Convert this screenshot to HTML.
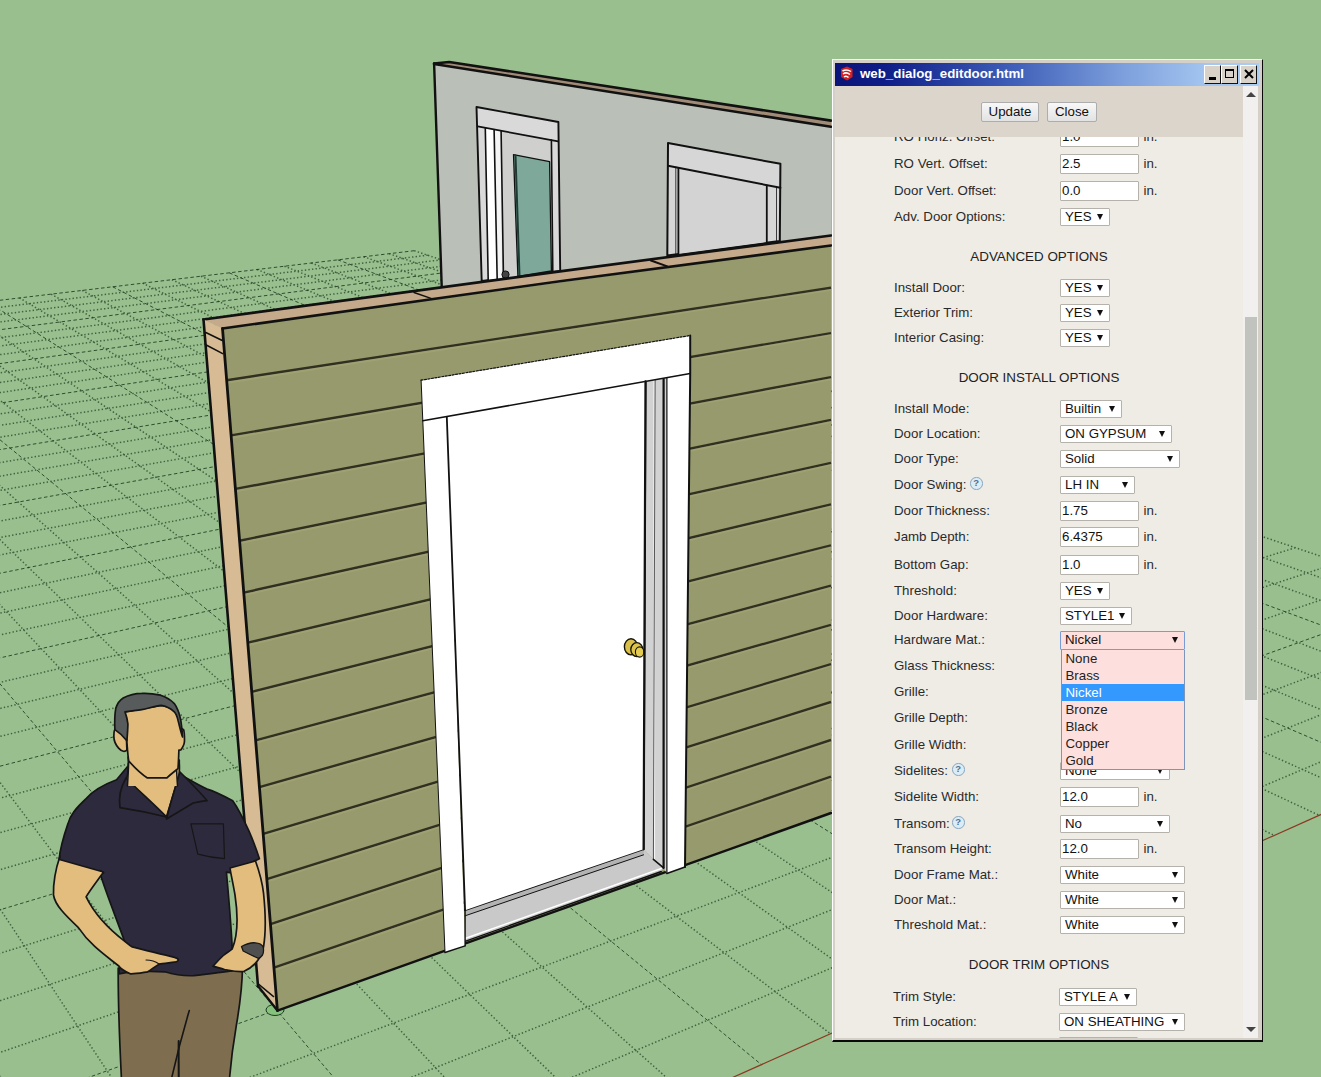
<!DOCTYPE html>
<html><head><meta charset="utf-8">
<style>
html,body{margin:0;padding:0;width:1321px;height:1077px;overflow:hidden;background:#99bf8f;font-family:"Liberation Sans",sans-serif}
#dlg{position:absolute;left:832px;top:59px;width:431px;height:983px;background:#d4d0c8;border-top:1px solid #f4f4f0;border-left:1px solid #ffffff;border-right:1.5px solid #0a0a0a;border-bottom:2px solid #0a0a0a;box-sizing:border-box}
#title{position:absolute;left:835px;top:63px;width:424px;height:23px;background:linear-gradient(90deg,#0a1478 0%,#0f1e88 12%,#3f5fb8 42%,#7d9fdc 68%,#a4c6f0 88%,#aacdf4 100%)}
#ttext{position:absolute;left:860px;top:66px;color:#fff;font-weight:bold;font-size:13.3px;line-height:16px;white-space:nowrap}
.tb{position:absolute;top:65px;height:19px;background:#d8d2c8;box-sizing:border-box;border-top:1px solid #fff;border-left:1px solid #fff;border-right:1.5px solid #111;border-bottom:1.5px solid #111}
#content{position:absolute;left:835px;top:86px;width:422px;height:952px;background:#efece6;overflow:hidden}
#bar{position:absolute;left:835px;top:86px;width:408px;height:51px;background:#dcd5cb}
#sb{position:absolute;left:1243px;top:86px;width:15px;height:952px;background:#f2f0ef}
#thumb{position:absolute;left:1245px;top:317px;width:12px;height:383px;background:#c1c3bf}
.btn{position:absolute;top:102px;height:20px;box-sizing:border-box;border:1px solid #adadad;border-radius:2px;background:linear-gradient(#f8f8f8,#e2e2e2);font-size:13.3px;color:#111;text-align:center;line-height:18px}
.lb{position:absolute;font-size:13.3px;line-height:16px;color:#2a2a2a;white-space:nowrap}
.hd{position:absolute;left:835px;width:408px;text-align:center;font-size:13.4px;line-height:16px;color:#222;letter-spacing:0px}
.in,.sel{position:absolute;height:20px;box-sizing:border-box;background:#fff;border:1px solid #b5b2ac;border-radius:1px}
.in span,.sel span{position:absolute;left:1px;font-size:13.3px;line-height:16px;color:#111;white-space:nowrap}
.sel i{position:absolute;right:6px;top:5px;width:0;height:0;border-left:3px solid transparent;border-right:3px solid transparent;border-top:6px solid #111}
.sel span{left:4px}
.foc{background:#fde0de;border:1px solid #7a9cd4}
.q{position:absolute;width:10.5px;height:10.5px;border:1px solid #8aa6bc;border-radius:50%;color:#4d6f8f;font-size:9.5px;line-height:10.5px;text-align:center;font-weight:bold;background:#dcecf6}
.dd{position:absolute;left:1060.5px;top:649.8px;width:124.2px;height:120.4px;box-sizing:border-box;background:#fde0de;border:1px solid #7e94b8;border-top:none}
.dd div{position:absolute;left:0;right:0;height:17px;font-size:13.3px;line-height:17px;padding-left:4px;color:#222}
.dd .hi{background:#3399ff;color:#fff}
</style></head><body>
<svg width="1321" height="1077" viewBox="0 0 1321 1077" style="position:absolute;left:0;top:0">
<rect width="1321" height="1077" fill="#99bf8f"/>
<g stroke="#1d3a1d" stroke-width="1" fill="none">
<path stroke-opacity="0.7" stroke-width="1.5" stroke-dasharray="1.4 2.2" d="M414.3 250.7L1650.2 667.3 M389.2 253.7L1618.8 681.3 M363.7 256.7L1586.2 695.9 M311.3 263.0L1517.2 726.7 M284.4 266.2L1480.7 743.1 M257.1 269.5L1442.7 760.0 M200.9 276.2L1362.0 796.1 M172.0 279.7L1319.1 815.3 M142.6 283.2L1274.2 835.4 M82.2 290.4L1178.5 878.2 M51.1 294.1L1127.2 901.1 M19.4 297.9L1073.6 925.1 M-45.8 305.7L958.1 976.7 M-79.3 309.7L895.9 1004.5 M-113.5 313.8L830.5 1033.8 M-184.0 322.3L688.6 1097.2 M-220.3 326.6L611.5 1131.6 M-257.4 331.1L529.9 1168.1 M-333.9 340.2L351.4 1247.9 M-373.4 344.9L253.4 1291.7 M-413.7 349.8L148.9 1338.4 M-497.0 359.7L-82.6 1441.9 M-540.0 364.9L-211.3 1499.5 M-584.1 370.2L-350.0 1561.4 M-675.1 381.0L-662.2 1701.0 M-722.2 386.7L-838.7 1779.9 M-770.4 392.5L-1031.4 1866.1 M-870.4 404.4L-1475.1 2064.4 M-922.2 410.6L-1732.2 2179.3 M-975.3 417.0L-2018.1 2307.1 M-1085.4 430.1L-2698.0 2611.0 M-1142.6 437.0L-3106.5 2793.7 M-1201.3 444.0L-3574.0 3002.7 M427.7 255.2L-1272.8 462.2 M441.3 259.8L-1284.4 473.6 M455.4 264.5L-1296.5 485.4 M484.5 274.3L-1322.2 510.6 M499.6 279.4L-1335.9 524.0 M515.2 284.7L-1350.2 537.9 M547.5 295.6L-1380.6 567.8 M564.3 301.2L-1396.9 583.7 M581.6 307.1L-1414.0 600.5 M617.7 319.2L-1450.7 636.4 M636.5 325.6L-1470.5 655.8 M655.8 332.1L-1491.3 676.2 M696.4 345.8L-1536.5 720.3 M717.5 352.9L-1560.9 744.3 M739.4 360.3L-1586.9 769.7 M785.2 375.7L-1643.6 825.3 M809.2 383.8L-1674.7 855.7 M834.1 392.2L-1707.9 888.2 M886.3 409.8L-1781.4 960.2 M913.8 419.1L-1822.3 1000.2 M942.3 428.7L-1866.2 1043.2 M1002.4 448.9L-1965.2 1140.1 M1034.2 459.6L-2021.2 1194.9 M1067.2 470.8L-2082.2 1254.7 M1137.2 494.3L-2222.6 1392.1 M1174.3 506.9L-2303.9 1471.8 M1212.9 519.9L-2394.3 1560.2 M1295.3 547.7L-2609.0 1770.4 M1339.2 562.5L-2737.8 1896.6 M1385.2 577.9L-2885.1 2040.8 M1483.6 611.1L-3253.6 2401.5 M1536.4 628.9L-3488.1 2631.2 M1591.9 647.6L-3769.8 2906.9"/>
<path stroke-opacity="0.85" stroke-dasharray="3.5 2.5" d="M337.7 259.8L1552.4 711.0 M229.2 272.8L1403.2 777.7 M112.7 286.8L1227.4 856.3 M-12.8 301.8L1017.2 950.3 M-148.4 318.0L761.4 1064.6 M-295.3 335.6L443.4 1206.8 M-454.9 354.7L37.1 1388.4 M-629.1 375.5L-499.8 1628.4 M-819.8 398.4L-1242.6 1960.5 M-1029.7 423.5L-2337.9 2450.1 M-1261.6 451.2L-4114.2 3244.1 M414.3 250.7L-1261.6 451.2 M469.7 269.4L-1309.1 497.7 M531.1 290.1L-1365.1 552.5 M599.4 313.1L-1431.9 618.0 M675.8 338.8L-1513.3 697.7 M761.9 367.9L-1614.4 796.6 M859.8 400.8L-1743.4 922.9 M971.8 438.6L-1913.7 1089.7 M1101.5 482.3L-2149.1 1320.1 M1253.2 533.5L-2495.3 1659.1 M1433.3 594.2L-3055.1 2207.2"/>
</g>
<line x1="1791.9" y1="604.0" x2="-499.8" y2="1628.4" stroke="#8a3a20" stroke-width="1.2"/><ellipse cx="275" cy="1010" rx="9" ry="5.5" fill="#85c27c" stroke="#1d3a20" stroke-width="1"/>
<polygon points="434.1,63.5 831.0,126.4 831.0,300.0 442.0,300.0" fill="#babfb8" stroke="none" stroke-width="0" stroke-linejoin="round" />
<polygon points="434.1,63.5 449.2,62.5 831.0,121.2 831.0,126.4" fill="#a08c76" stroke="none" stroke-width="0" stroke-linejoin="round" />
<polyline points="434.1,64.0 831.0,126.8" fill="none" stroke="#111" stroke-width="2.6" stroke-linejoin="round" stroke-linecap="round" />
<polyline points="434.1,63.5 449.2,62.0 831.0,120.6" fill="none" stroke="#111" stroke-width="2.6" stroke-linejoin="round" stroke-linecap="round" />
<polyline points="434.1,63.5 442.0,295.0" fill="none" stroke="#111" stroke-width="2.4" stroke-linejoin="round" stroke-linecap="round" />
<polygon points="476.5,107.0 558.4,122.0 560.2,271.0 481.7,281.0" fill="#d9d9d9" stroke="#111" stroke-width="1.9" stroke-linejoin="round" />
<polygon points="501.1,130.7 551.4,139.8 551.4,275.0 501.1,278.0" fill="#cfd0ce" stroke="none" stroke-width="0" stroke-linejoin="round" />
<polygon points="485.3,128.2 494.1,129.8 497.0,279.0 488.0,280.0" fill="#ffffff" stroke="none" stroke-width="0" stroke-linejoin="round" />
<polygon points="494.1,129.8 501.1,131.0 502.0,279.0 497.0,279.0" fill="#f4f4f4" stroke="none" stroke-width="0" stroke-linejoin="round" />
<polyline points="477.7,126.4 558.1,141.4" fill="none" stroke="#111" stroke-width="1.8" stroke-linejoin="round" stroke-linecap="round" />
<polyline points="485.3,128.3 488.2,280.0" fill="none" stroke="#111" stroke-width="1.6" stroke-linejoin="round" stroke-linecap="round" />
<polyline points="494.1,129.8 497.2,280.0" fill="none" stroke="#111" stroke-width="1.6" stroke-linejoin="round" stroke-linecap="round" />
<polyline points="501.1,131.0 503.5,280.0" fill="none" stroke="#111" stroke-width="1.6" stroke-linejoin="round" stroke-linecap="round" />
<polyline points="551.4,140.0 552.8,272.0" fill="none" stroke="#111" stroke-width="1.6" stroke-linejoin="round" stroke-linecap="round" />
<polygon points="513.5,154.6 549.6,161.7 551.4,271.0 517.9,276.3" fill="#7ea99a" stroke="#111" stroke-width="1.3" stroke-linejoin="round" />
<polyline points="515.5,155.5 519.5,276.0" fill="none" stroke="#1d3b35" stroke-width="2" stroke-linejoin="round" stroke-linecap="round" />
<circle cx="505.5" cy="274.5" r="3.6" fill="#444" stroke="#111" stroke-width="1"/>
<polygon points="668.0,143.0 780.4,163.8 779.8,241.1 667.3,255.4" fill="#d6d6d6" stroke="#111" stroke-width="2" stroke-linejoin="round" />
<polygon points="678.4,167.5 766.8,185.5 766.8,242.0 678.4,254.0" fill="#d3d3d3" stroke="none" stroke-width="0" stroke-linejoin="round" />
<polyline points="668.0,165.7 780.4,187.8" fill="none" stroke="#111" stroke-width="2" stroke-linejoin="round" stroke-linecap="round" />
<polyline points="678.4,168.0 678.4,254.0" fill="none" stroke="#111" stroke-width="1.8" stroke-linejoin="round" stroke-linecap="round" />
<polyline points="675.8,167.0 675.8,254.0" fill="none" stroke="#111" stroke-width="0.8" stroke-linejoin="round" stroke-linecap="round" />
<polyline points="766.8,185.5 766.8,242.0" fill="none" stroke="#111" stroke-width="1.8" stroke-linejoin="round" stroke-linecap="round" />
<polyline points="776.5,187.5 776.5,241.0" fill="none" stroke="#111" stroke-width="0.8" stroke-linejoin="round" stroke-linecap="round" />
<polygon points="203.5,319.5 560.0,271.4 831.0,235.5 831.0,245.5 560.0,281.2 222.5,328.5" fill="#c4a98a" stroke="none" stroke-width="0" stroke-linejoin="round" />
<polyline points="414.0,292.5 431.0,298.4" fill="none" stroke="#111" stroke-width="1.4" stroke-linejoin="round" stroke-linecap="round" />
<polyline points="650.9,260.5 667.3,266.4" fill="none" stroke="#111" stroke-width="2" stroke-linejoin="round" stroke-linecap="round" />
<polyline points="203.5,319.5 560.0,271.4 831.0,235.5" fill="none" stroke="#111" stroke-width="2.6" stroke-linejoin="round" stroke-linecap="round" />
<polygon points="203.5,319.5 222.5,328.5 277.4,1010.6 258.0,986.0" fill="#d6bb95" stroke="none" stroke-width="0" stroke-linejoin="round" />
<polyline points="205.8,332.5 222.3,340.5" fill="none" stroke="#111" stroke-width="1.6" stroke-linejoin="round" stroke-linecap="round" />
<polyline points="206.2,345.0 222.7,353.6" fill="none" stroke="#111" stroke-width="1.6" stroke-linejoin="round" stroke-linecap="round" />
<polyline points="257.9,983.6 273.6,996.6" fill="none" stroke="#111" stroke-width="1.4" stroke-linejoin="round" stroke-linecap="round" />
<polygon points="222.5,328.5 831.0,245.5 831.0,813.0 277.4,1010.6" fill="#979a6c" stroke="none" stroke-width="0" stroke-linejoin="round" />
<line x1="226.7" y1="380.2" x2="831.0" y2="287.8" stroke="#25251a" stroke-width="2.4" stroke-opacity="0.9"/>
<line x1="226.7" y1="382.7" x2="831.0" y2="289.8" stroke="#b0ae80" stroke-width="2" stroke-opacity="0.35"/>
<line x1="231.1" y1="435.4" x2="831.0" y2="333.1" stroke="#25251a" stroke-width="2.4" stroke-opacity="0.9"/>
<line x1="231.1" y1="437.9" x2="831.0" y2="335.1" stroke="#b0ae80" stroke-width="2" stroke-opacity="0.35"/>
<line x1="235.4" y1="488.9" x2="831.0" y2="377.1" stroke="#25251a" stroke-width="2.4" stroke-opacity="0.9"/>
<line x1="235.4" y1="491.4" x2="831.0" y2="379.2" stroke="#b0ae80" stroke-width="2" stroke-opacity="0.35"/>
<line x1="239.6" y1="540.7" x2="831.0" y2="419.9" stroke="#25251a" stroke-width="2.4" stroke-opacity="0.9"/>
<line x1="239.6" y1="543.2" x2="831.0" y2="421.9" stroke="#b0ae80" stroke-width="2" stroke-opacity="0.35"/>
<line x1="243.8" y1="592.6" x2="831.0" y2="462.9" stroke="#25251a" stroke-width="2.4" stroke-opacity="0.9"/>
<line x1="243.8" y1="595.1" x2="831.0" y2="464.9" stroke="#b0ae80" stroke-width="2" stroke-opacity="0.35"/>
<line x1="247.8" y1="642.7" x2="831.0" y2="504.4" stroke="#25251a" stroke-width="2.4" stroke-opacity="0.9"/>
<line x1="247.8" y1="645.2" x2="831.0" y2="506.5" stroke="#b0ae80" stroke-width="2" stroke-opacity="0.35"/>
<line x1="251.7" y1="691.8" x2="831.0" y2="545.3" stroke="#25251a" stroke-width="2.4" stroke-opacity="0.9"/>
<line x1="251.7" y1="694.3" x2="831.0" y2="547.3" stroke="#b0ae80" stroke-width="2" stroke-opacity="0.35"/>
<line x1="255.6" y1="740.3" x2="831.0" y2="585.7" stroke="#25251a" stroke-width="2.4" stroke-opacity="0.9"/>
<line x1="255.6" y1="742.8" x2="831.0" y2="587.8" stroke="#b0ae80" stroke-width="2" stroke-opacity="0.35"/>
<line x1="259.4" y1="787.1" x2="831.0" y2="624.8" stroke="#25251a" stroke-width="2.4" stroke-opacity="0.9"/>
<line x1="259.4" y1="789.6" x2="831.0" y2="626.9" stroke="#b0ae80" stroke-width="2" stroke-opacity="0.35"/>
<line x1="263.2" y1="833.9" x2="831.0" y2="664.1" stroke="#25251a" stroke-width="2.4" stroke-opacity="0.9"/>
<line x1="263.2" y1="836.4" x2="831.0" y2="666.1" stroke="#b0ae80" stroke-width="2" stroke-opacity="0.35"/>
<line x1="266.8" y1="879.1" x2="831.0" y2="702.0" stroke="#25251a" stroke-width="2.4" stroke-opacity="0.9"/>
<line x1="266.8" y1="881.6" x2="831.0" y2="704.1" stroke="#b0ae80" stroke-width="2" stroke-opacity="0.35"/>
<line x1="270.5" y1="924.2" x2="831.0" y2="740.0" stroke="#25251a" stroke-width="2.4" stroke-opacity="0.9"/>
<line x1="270.5" y1="926.7" x2="831.0" y2="742.1" stroke="#b0ae80" stroke-width="2" stroke-opacity="0.35"/>
<line x1="274.0" y1="967.7" x2="831.0" y2="776.7" stroke="#25251a" stroke-width="2.4" stroke-opacity="0.9"/>
<line x1="274.0" y1="970.2" x2="831.0" y2="778.8" stroke="#b0ae80" stroke-width="2" stroke-opacity="0.35"/>
<polyline points="222.5,328.5 560.0,281.2 831.0,245.5" fill="none" stroke="#111" stroke-width="2.6" stroke-linejoin="round" stroke-linecap="round" />
<polyline points="203.5,319.5 258.0,986.0" fill="none" stroke="#111" stroke-width="2.6" stroke-linejoin="round" stroke-linecap="round" />
<polyline points="222.5,328.5 277.4,1010.6" fill="none" stroke="#111" stroke-width="2.8" stroke-linejoin="round" stroke-linecap="round" />
<polyline points="258.0,986.0 277.4,1010.6 831.0,813.0" fill="none" stroke="#111" stroke-width="2.4" stroke-linejoin="round" stroke-linecap="round" />
<polygon points="465.1,910.2 643.6,849.2 653.4,859.4 663.6,867.8 661.3,871.5 465.0,941.4" fill="#c9c9c9" stroke="none" stroke-width="0" stroke-linejoin="round" />
<polygon points="465.1,910.2 643.6,849.2 643.6,854.8 465.1,915.8" fill="#b3b3b3" stroke="none" stroke-width="0" stroke-linejoin="round" />
<polyline points="465.1,910.2 643.6,849.2" fill="none" stroke="#111" stroke-width="1.8" stroke-linejoin="round" stroke-linecap="round" />
<polyline points="465.1,915.8 643.6,854.8" fill="none" stroke="#111" stroke-width="1" stroke-linejoin="round" stroke-linecap="round" />
<polyline points="465.0,938.5 661.3,868.5" fill="none" stroke="#fff" stroke-width="1.4" stroke-linejoin="round" stroke-linecap="round" />
<polyline points="465.0,941.4 661.3,871.5" fill="none" stroke="#111" stroke-width="1.4" stroke-linejoin="round" stroke-linecap="round" />
<polygon points="645.5,381.4 666.9,377.6 666.9,873.4 663.6,867.8 653.4,859.4 643.6,849.2" fill="#d2d2d2" stroke="none" stroke-width="0" stroke-linejoin="round" />
<polygon points="653.4,380.0 655.1,379.7 655.1,860.0 653.4,859.0" fill="#f4f4f4" stroke="none" stroke-width="0" stroke-linejoin="round" />
<polyline points="653.4,859.4 663.6,867.8" fill="none" stroke="#111" stroke-width="1.6" stroke-linejoin="round" stroke-linecap="round" />
<polyline points="645.5,381.4 643.6,849.2" fill="none" stroke="#111" stroke-width="2" stroke-linejoin="round" stroke-linecap="round" />
<polyline points="663.6,379.0 663.6,868.0" fill="none" stroke="#111" stroke-width="2.2" stroke-linejoin="round" stroke-linecap="round" />
<polyline points="655.1,380.0 653.4,859.0" fill="none" stroke="#111" stroke-width="0.7" stroke-linejoin="round" stroke-linecap="round" />
<polygon points="446.8,416.6 645.5,381.4 643.6,849.2 465.1,910.2" fill="#ffffff" stroke="none" stroke-width="0" stroke-linejoin="round" />
<polygon points="421.1,380.2 690.2,335.5 690.2,373.5 422.8,420.8" fill="#ffffff" stroke="none" stroke-width="0" stroke-linejoin="round" />
<polygon points="422.8,420.8 446.8,416.6 465.1,945.8 445.0,952.5" fill="#ffffff" stroke="none" stroke-width="0" stroke-linejoin="round" />
<polygon points="666.9,377.6 690.2,373.5 685.0,866.9 666.9,873.4" fill="#ffffff" stroke="none" stroke-width="0" stroke-linejoin="round" />
<polyline points="421.1,380.2 690.2,335.5" fill="none" stroke="#111" stroke-width="1.2" stroke-linejoin="round" stroke-linecap="round" stroke-dasharray="2 1.5"/>
<polyline points="422.8,420.8 690.2,373.5" fill="none" stroke="#111" stroke-width="1.6" stroke-linejoin="round" stroke-linecap="round" />
<polyline points="446.8,417.0 465.1,910.2" fill="none" stroke="#111" stroke-width="1.8" stroke-linejoin="round" stroke-linecap="round" />
<polyline points="465.1,910.0 465.1,945.8" fill="none" stroke="#111" stroke-width="1.4" stroke-linejoin="round" stroke-linecap="round" />
<polyline points="690.2,335.5 690.2,373.5 685.0,866.9" fill="none" stroke="#111" stroke-width="2" stroke-linejoin="round" stroke-linecap="round" />
<polyline points="666.9,377.6 666.9,873.4" fill="none" stroke="#111" stroke-width="1.2" stroke-linejoin="round" stroke-linecap="round" />
<polyline points="421.1,380.2 422.8,420.8 445.0,952.5" fill="none" stroke="#111" stroke-width="1" stroke-linejoin="round" stroke-linecap="round" />
<polyline points="445.0,952.5 465.1,945.8" fill="none" stroke="#111" stroke-width="1.4" stroke-linejoin="round" stroke-linecap="round" />
<polyline points="666.9,873.4 685.0,866.9" fill="none" stroke="#111" stroke-width="1.6" stroke-linejoin="round" stroke-linecap="round" />
<ellipse cx="631" cy="646.8" rx="6.6" ry="8.1" fill="#d8c04a" stroke="#151208" stroke-width="1.4"/>
<ellipse cx="636.8" cy="649.6" rx="6" ry="6.9" fill="#dcc44c" stroke="#151208" stroke-width="1.3"/>
<ellipse cx="639.6" cy="652" rx="4.2" ry="5.1" fill="#e4cc52" stroke="#151208" stroke-width="1.1"/>
<polyline points="645.5,381.4 643.6,849.2" fill="none" stroke="#111" stroke-width="2.2" stroke-linejoin="round" stroke-linecap="round" /><g stroke="#161616" stroke-width="1.7" stroke-linejoin="round" stroke-linecap="round">
<!-- pants -->
<path d="M118.2,968 L242.5,966 C242.3,990 239,1010 236.3,1025.7 C233,1045 231,1060 229.4,1080 L121.5,1080 C119.5,1040 118,1000 118.2,968 Z" fill="#7e6d4f"/>
<path d="M189.3,1010.6 C185,1025 178,1050 171.2,1080" fill="none" stroke-width="1.6"/>
<path d="M178.7,1041 C178.5,1055 178.8,1068 178.7,1080" fill="none" stroke-width="2"/>
<!-- shirt -->
<path d="M116.6,779.8 C100,786 92,792 86.4,798.4 C76,808 70,815 67.9,823.9 C63,838 60,850 59,860 C72,866 88,871 103.5,873 C100,870 99,870 99.6,872 C105,890 115,915 124.5,941.1 C122,952 120,962 118.8,973.8 C135,971 150,971 164.9,971.8 C175,975 185,976 193.7,975.7 C210,974 222,972 232.2,970.9 C233,960 233,955 232.2,946.9 C231,925 229,900 226.4,872 C228,872 229,873 230.3,872.7 C240,868 250,863 259.4,858.7 C256,848 252,838 248.9,830.9 C243,818 238,808 232.7,800.7 C222,795 214,791 207.1,789.1 C198,785 190,780 181,775 L128,766 Z" fill="#2e2a3d"/>
<!-- right arm + hand -->
<path d="M230,868 L255.5,861 C258,868 262,880 263.5,893 C265.5,912 265.5,935 263.5,947 C263,949 262.8,950 262.5,951 C260,960 252,968 243.7,971.5 C235,972 228,970 224.5,969.5 C220,968 215,967 213,966.1 C217,962 221,957 224.5,954.6 C228,952 231,950 232.2,948.8 C238,935 238,915 235,895 C233,883 231,875 230,868 Z" fill="#e3bd7e"/>
<!-- left arm + hand -->
<path d="M59.5,859.5 L103.5,872 C98,880 90,890 86.1,896.9 C95,915 110,930 124.5,941.1 C128,944 130,946 132.2,946.9 C148,951 162,954 174.5,957.4 C177,958 178.5,959 178.4,960.3 C177,962 176,962.2 174.5,962.2 C168,963 162,963.5 159.1,964.2 C154,967 151,970 147.6,971.8 C140,973 135,974 130.3,973.8 C124,971 120,968 118.8,966 C105,955 90,945 78.4,927.6 C65,915 55,905 53.5,895 C53,880 56,868 60,856 Z" fill="#e3bd7e"/>
<path d="M159,964 C155,961 150,960 146,960" fill="none" stroke-width="1.1"/>
<!-- neck / v skin -->
<path d="M128.2,757 C129,770 128,775 126,782 C140,795 155,808 166.5,817 C170,805 175,790 179,775 C180,768 179,763 179.3,760 Z" fill="#e3bd7e"/>
<!-- collar flaps -->
<path d="M126,778 C122,785 118,795 120,807.7 C135,810 150,813 166.5,817 C155,805 140,792 126,778 Z" fill="#2e2a3d"/>
<path d="M180,772 C190,782 200,792 207.1,800.7 C203,801 198,802 193.2,803 C185,808 175,814 166.5,819 C170,805 175,788 180,772 Z" fill="#2e2a3d"/>
<!-- pocket -->
<path d="M190.9,823.9 L223.4,823.9 L224.5,858.7 C215,858 205,856 197.8,854.1 Z" fill="#2e2a3d" stroke-width="1.2"/>
<!-- watch -->
<path d="M241.5,946.5 C246,944 251,942.5 255.2,942.8 C259,943 262,944.5 263.2,947 C263.8,950 263.5,953 262.5,955 C261,957 259.5,958.2 258.5,958.4 C253,956 247,953 243.2,951 Z" fill="#4f4f4f" stroke-width="1.3"/>
<!-- neck -->
<path d="M128.8,758 C128.5,770 128,778 127.5,786 L177.5,786 C177,778 176.5,772 176.5,765 Z" fill="#e3bd7e" stroke="none"/>
<path d="M128.8,758 C128.5,770 128,778 127.5,786 M176.5,765 C176.5,772 177,778 177.5,786" fill="none" stroke-width="1.5"/>
<!-- head skin -->
<path d="M125,711.9 C126,725 126.5,740 126.9,750 C125,752 122,752 118.6,748.1 C115,744 113.5,740 113.9,735 C114,731 114.5,730 114.9,729.6 L126,731 C127,740 127.5,755 128.8,761.1 C135,768 141,774 147.4,777.9 L166.9,777.9 C171,774 175,771 178,768.6 C178.5,762 178.7,755 178.9,750 C180,750 180.5,750 180.8,750 C183,747 184.5,744 184.5,740.7 C184.5,735 184,731 183.6,729.6 C182,728.5 181.5,728.5 180.8,728.6 C180,724 179,720 178,716 C176,711 172,707 161.3,705.4 Z" fill="#e3bd7e"/>
<!-- hair -->
<path d="M114.9,729.6 C114.5,722 114.8,714 115.8,708.2 C117.5,703 120,700 123.2,698 C129,695 135,693.5 141.8,693.4 C148,693 155,694 160.4,695.2 C166,697 171,700 174.3,703.6 C177.5,708 179.5,714 180.8,720.3 C181.7,726 182.3,731 182.6,737 C181,733 179.5,726 178,720.3 C177,716 176,713.5 174.3,711.9 C170,708 166,706 161.3,705.4 C155,706 148,708.5 141.8,709.6 C136,710.5 130,711 125,711.9 C126.5,716 127.5,720 127.9,724 C127.8,730 127.3,736 126.9,740.7 C124,737 120,733 114.9,729.6 Z" fill="#575b5c"/>
</g>
</svg>
<div id="dlg"></div>
<div id="title"></div>
<svg style="position:absolute;left:839px;top:65px" width="16" height="17" viewBox="0 0 16 17">
<path d="M2,4 L8,1.5 L13.5,4 L13.5,12 L8,15.5 L2,12 Z" fill="#d42020"/>
<path d="M3.5,6 C6,4.5 9,4.5 12,6.5 M4,9 C6,7.5 8.5,7.5 11,9.5 M5,12 C6.5,10.8 8,11 9.5,12.5" stroke="#fff" stroke-width="1.5" fill="none"/>
</svg>
<div id="ttext">web_dialog_editdoor.html</div>
<div class="tb" style="left:1204px;width:17px"><div style="position:absolute;left:4px;top:11px;width:7px;height:2.5px;background:#000"></div></div>
<div class="tb" style="left:1221px;width:17px"><div style="position:absolute;left:3px;top:3px;width:9px;height:9px;box-sizing:border-box;border:1px solid #000;border-top:2px solid #000"></div></div>
<div class="tb" style="left:1240px;width:17px"><svg style="position:absolute;left:3px;top:3px" width="10" height="10"><path d="M1,1 L9,9 M9,1 L1,9" stroke="#000" stroke-width="2"/></svg></div>
<div id="content"><div style="position:absolute;left:-835px;top:-86px;width:1321px;height:1077px">
<div class="lb" style="left:894px;top:128.9px">RO Horiz. Offset:</div>
<div class="in" style="left:1060px;top:127px;width:79px"><span style="top:0.9px">1.0</span></div>
<div class="lb" style="left:1143.5px;top:128.9px">in.</div>
<div class="lb" style="left:894px;top:155.9px">RO Vert. Offset:</div>
<div class="in" style="left:1060px;top:154px;width:79px"><span style="top:0.9px">2.5</span></div>
<div class="lb" style="left:1143.5px;top:155.9px">in.</div>
<div class="lb" style="left:894px;top:182.9px">Door Vert. Offset:</div>
<div class="in" style="left:1060px;top:181px;width:79px"><span style="top:0.9px">0.0</span></div>
<div class="lb" style="left:1143.5px;top:182.9px">in.</div>
<div class="lb" style="left:894px;top:209.1px">Adv. Door Options:</div>
<div class="sel" style="left:1060px;top:208px;width:50px;height:18px"><span style="top:0.1px">YES</span><i></i></div>
<div class="lb" style="left:894px;top:280.1px">Install Door:</div>
<div class="sel" style="left:1060px;top:279px;width:50px;height:18px"><span style="top:0.1px">YES</span><i></i></div>
<div class="lb" style="left:894px;top:305.1px">Exterior Trim:</div>
<div class="sel" style="left:1060px;top:304px;width:50px;height:18px"><span style="top:0.1px">YES</span><i></i></div>
<div class="lb" style="left:894px;top:330.1px">Interior Casing:</div>
<div class="sel" style="left:1060px;top:329px;width:50px;height:18px"><span style="top:0.1px">YES</span><i></i></div>
<div class="lb" style="left:894px;top:401.1px">Install Mode:</div>
<div class="sel" style="left:1060px;top:400px;width:62px;height:18px"><span style="top:0.1px">Builtin</span><i></i></div>
<div class="lb" style="left:894px;top:426.1px">Door Location:</div>
<div class="sel" style="left:1060px;top:425px;width:112px;height:18px"><span style="top:0.1px">ON GYPSUM</span><i></i></div>
<div class="lb" style="left:894px;top:451.1px">Door Type:</div>
<div class="sel" style="left:1060px;top:450px;width:120px;height:18px"><span style="top:0.1px">Solid</span><i></i></div>
<div class="lb" style="left:894px;top:477.1px">Door Swing:</div>
<div class="q" style="left:970px;top:477.4px">?</div>
<div class="sel" style="left:1060px;top:476px;width:75px;height:18px"><span style="top:0.1px">LH IN</span><i></i></div>
<div class="lb" style="left:894px;top:502.9px">Door Thickness:</div>
<div class="in" style="left:1060px;top:501px;width:79px"><span style="top:0.9px">1.75</span></div>
<div class="lb" style="left:1143.5px;top:502.9px">in.</div>
<div class="lb" style="left:894px;top:528.9px">Jamb Depth:</div>
<div class="in" style="left:1060px;top:527px;width:79px"><span style="top:0.9px">6.4375</span></div>
<div class="lb" style="left:1143.5px;top:528.9px">in.</div>
<div class="lb" style="left:894px;top:556.9px">Bottom Gap:</div>
<div class="in" style="left:1060px;top:555px;width:79px"><span style="top:0.9px">1.0</span></div>
<div class="lb" style="left:1143.5px;top:556.9px">in.</div>
<div class="lb" style="left:894px;top:583.1px">Threshold:</div>
<div class="sel" style="left:1060px;top:582px;width:50px;height:18px"><span style="top:0.1px">YES</span><i></i></div>
<div class="lb" style="left:894px;top:608.1px">Door Hardware:</div>
<div class="sel" style="left:1060px;top:607px;width:72px;height:18px"><span style="top:0.1px">STYLE1</span><i></i></div>
<div class="lb" style="left:894px;top:632.1px">Hardware Mat.:</div>
<div class="sel foc" style="left:1060px;top:631px;width:125px;height:19px"><span style="top:0.1px">Nickel</span><i></i></div>
<div class="lb" style="left:894px;top:658.3px">Glass Thickness:</div>
<div class="lb" style="left:894px;top:684.4px">Grille:</div>
<div class="lb" style="left:894px;top:710.4px">Grille Depth:</div>
<div class="lb" style="left:894px;top:737.0px">Grille Width:</div>
<div class="lb" style="left:894px;top:763.1px">Sidelites:</div>
<div class="q" style="left:952px;top:763.4px">?</div>
<div class="sel" style="left:1060px;top:762px;width:110px;height:18px"><span style="top:0.1px">None</span><i></i></div>
<div class="lb" style="left:894px;top:788.9px">Sidelite Width:</div>
<div class="in" style="left:1060px;top:787px;width:79px"><span style="top:0.9px">12.0</span></div>
<div class="lb" style="left:1143.5px;top:788.9px">in.</div>
<div class="lb" style="left:894px;top:816.1px">Transom:</div>
<div class="q" style="left:952px;top:816.4px">?</div>
<div class="sel" style="left:1060px;top:815px;width:110px;height:18px"><span style="top:0.1px">No</span><i></i></div>
<div class="lb" style="left:894px;top:840.9px">Transom Height:</div>
<div class="in" style="left:1060px;top:839px;width:79px"><span style="top:0.9px">12.0</span></div>
<div class="lb" style="left:1143.5px;top:840.9px">in.</div>
<div class="lb" style="left:894px;top:867.1px">Door Frame Mat.:</div>
<div class="sel" style="left:1060px;top:866px;width:125px;height:18px"><span style="top:0.1px">White</span><i></i></div>
<div class="lb" style="left:894px;top:892.1px">Door Mat.:</div>
<div class="sel" style="left:1060px;top:891px;width:125px;height:18px"><span style="top:0.1px">White</span><i></i></div>
<div class="lb" style="left:894px;top:917.1px">Threshold Mat.:</div>
<div class="sel" style="left:1060px;top:916px;width:125px;height:18px"><span style="top:0.1px">White</span><i></i></div>
<div class="lb" style="left:893px;top:989.1px">Trim Style:</div>
<div class="sel" style="left:1059px;top:988px;width:78px;height:18px"><span style="top:0.1px">STYLE A</span><i></i></div>
<div class="lb" style="left:893px;top:1014.1px">Trim Location:</div>
<div class="sel" style="left:1059px;top:1013px;width:126px;height:18px"><span style="top:0.1px">ON SHEATHING</span><i></i></div>
<div class="in" style="left:1059px;top:1037px;width:79px"><span style="top:0.9px"></span></div>
<div class="hd" style="top:249.2px">ADVANCED OPTIONS</div>
<div class="hd" style="top:370.0px">DOOR INSTALL OPTIONS</div>
<div class="hd" style="top:957.4px">DOOR TRIM OPTIONS</div>
<div class="dd">
<div style="top:0px">None</div>
<div style="top:17px">Brass</div>
<div class="hi" style="top:34px">Nickel</div>
<div style="top:51px">Bronze</div>
<div style="top:68px">Black</div>
<div style="top:85px">Copper</div>
<div style="top:102px">Gold</div>
</div>
</div></div>
<div id="bar"></div>
<div class="btn" style="left:981px;width:58px">Update</div>
<div class="btn" style="left:1047px;width:50px">Close</div>
<div id="sb"></div>
<svg style="position:absolute;left:1246px;top:91px" width="10" height="8"><path d="M0,6 L5,1 L10,6 Z" fill="#444"/></svg>
<svg style="position:absolute;left:1246px;top:1026px" width="10" height="8"><path d="M0,1 L5,6 L10,1 Z" fill="#444"/></svg>
<div id="thumb"></div>
</body></html>
